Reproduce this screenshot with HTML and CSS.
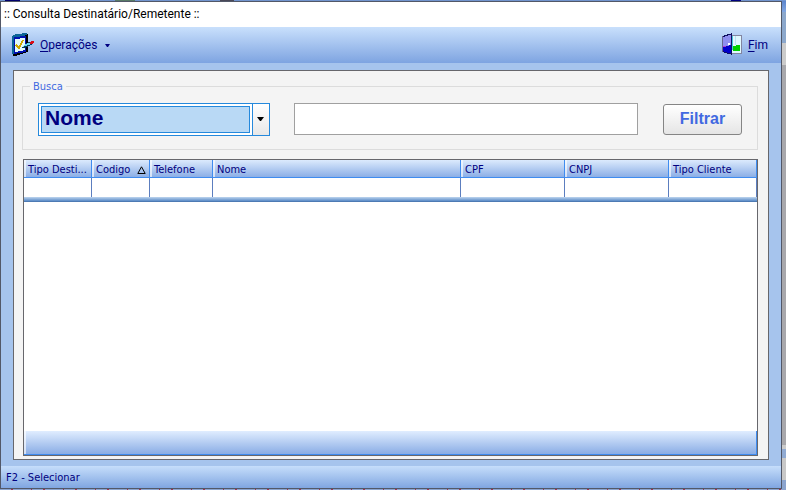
FILE: index.html
```html
<!DOCTYPE html>
<html lang="pt-BR">
<head>
<meta charset="utf-8">
<meta name="viewport" content="width=device-width, initial-scale=1">
<title>Consulta Destinatário/Remetente</title>
<link rel="stylesheet" href="styles.css">
</head>
<body>
<main class="window">
  <h1 class="titlebar">:: Consulta Destinatário/Remetente ::</h1>
  <nav class="toolbar">
    <button class="tool" type="button">
      <svg class="tool-icon" viewBox="0 0 24 24" width="24" height="24" shape-rendering="crispEdges" aria-hidden="true">
        <path d="M2 3 17 1V19L4 23H2z" fill="#000"/>
        <path d="M1 3 5 1 16 0V2L3 5V21H1z" fill="#0b6496"/>
        <path d="M3 4 15 3V19L3 21z" fill="#0010b0"/>
        <path d="M4 6 14 5V17L4 19z" fill="#e2fafa"/>
        <path d="M5 12 8 15 12 7" fill="none" stroke="#d0a800" stroke-width="2"/>
        <path d="M11 15 14 11 21 8 23 9 22 11 16 14 13 15z" fill="#053c58"/>
        <path d="M11 14 14 11 20 9V11L15 13z" fill="#65d5ef"/>
        <path d="M20 8H23V10L21 11H19V9z" fill="#d80b16"/>
      </svg>
      <span><u>O</u>perações</span>
      <svg class="caret" viewBox="0 0 5 3" width="5" height="3" aria-hidden="true"><path d="M0 0H5L3 3H2z" fill="#000080"/></svg>
    </button>
    <button class="tool exit" type="button">
      <svg class="tool-icon" viewBox="0 0 24 24" width="24" height="24" shape-rendering="crispEdges" aria-hidden="true">
        <path d="M11 2H22V21H11z" fill="#8285a0"/>
        <path d="M12 3H21V20H12z" fill="#e0f8ff"/>
        <path d="M13 13H16V12H20V18H13z" fill="#00d000"/>
        <path d="M15 3H16V12H15z" fill="#b8e4f0"/>
        <path d="M2 3 9 1 12 0V22L9 21 2 19z" fill="#101060"/>
        <path d="M2 3H3V19H2z" fill="#686890"/>
        <path d="M3 4 9 2H11V13L3 14z" fill="#8e8eee"/>
        <path d="M3 14 11 12V20L8 20 3 18z" fill="#0000ca"/>
        <path d="M12 3H13V17H12z" fill="#45c9dc"/>
        <path d="M8 10H10V12H8z" fill="#fff"/>
        <path d="M3 13H6V14H3z" fill="#b039dc"/>
      </svg>
      <span><u>F</u>im</span>
    </button>
  </nav>
  <section class="workspace">
    <div class="panel">
      <fieldset class="search">
        <legend>Busca</legend>
        <div class="combo">
          <select aria-label="Campo de busca"><option>Nome</option></select>
          <svg class="combo-arrow" viewBox="0 0 7 4" width="7" height="4" aria-hidden="true"><path d="M0 0H7L4 4H3z" fill="#000"/></svg>
        </div>
        <input class="query" type="text" aria-label="Texto da busca">
        <button class="filter" type="button">Filtrar</button>
      </fieldset>
      <div class="grid">
        <table>
          <colgroup>
            <col class="c-dest"><col class="c-code"><col class="c-phone"><col><col class="c-doc"><col class="c-doc"><col class="c-client">
          </colgroup>
          <thead>
            <tr>
              <th scope="col">Tipo Desti...</th>
              <th scope="col"><span class="sorted">Codigo <svg viewBox="0 0 9 8" width="9" height="8" aria-hidden="true"><path d="M4.5 .8 8.2 7.5H.8z" fill="none" stroke="#000"/></svg></span></th>
              <th scope="col">Telefone</th>
              <th scope="col">Nome</th>
              <th scope="col">CPF</th>
              <th scope="col">CNPJ</th>
              <th scope="col">Tipo Cliente</th>
            </tr>
          </thead>
          <tbody>
            <tr>
              <td><input type="text" aria-label="Filtro Tipo Destinatário"></td>
              <td><input type="text" aria-label="Filtro Codigo"></td>
              <td><input type="text" aria-label="Filtro Telefone"></td>
              <td><input type="text" aria-label="Filtro Nome"></td>
              <td><input type="text" aria-label="Filtro CPF"></td>
              <td><input type="text" aria-label="Filtro CNPJ"></td>
              <td><input type="text" aria-label="Filtro Tipo Cliente"></td>
            </tr>
          </tbody>
        </table>
        <div class="divider"></div>
        <div class="rows"></div>
        <div class="grid-footer"></div>
      </div>
    </div>
  </section>
  <footer class="status">F2 - Selecionar</footer>
</main>
</body>
</html>
```
FILE: styles.css
```css
* { box-sizing: border-box; }

body {
  display: flex;
  min-height: 100vh;
  margin: 0;
  padding: 1px 4px 1px 0;
  font-family: "DejaVu Sans Condensed", "DejaVu Sans", sans-serif;
  color: #000080;
  background:
    repeating-linear-gradient(90deg, transparent 0 11px, #a33450 11px 13px, transparent 13px 31px, #a33450 31px 32px) bottom / 100% 1px no-repeat,
    linear-gradient(90deg, #7194ce 0 5px, #00006c 5px 20px, #7194ce 20px 115px, #587b67 115px 135px, #7194ce 135px 220px, #484858 220px 234px, #7194ce 234px 731px, #000080 731px 741px, #7194ce 741px) top / 100% 1px no-repeat,
    linear-gradient(#5983cb 0, #82a7e2 12px, #8ca8cc 12px 43px, #cbcbcb 43px 65px, #a8a8ac 65px 445px, #cbcbcb 445px 449px, #91abd3 449px 458px, #c8c8c8 458px 480px, #8ba4ce 480px);
}

button, input, select { font: inherit; color: inherit; }

.window {
  display: flex;
  flex: 1;
  flex-direction: column;
  min-width: 0;
  border: 1px solid #525868;
  background: #a6c4ed;
}

.titlebar {
  height: 25px;
  margin: 0;
  padding-left: 3px;
  background: #fff;
  color: #000;
  font: 12px/25px Roboto, sans-serif;
}

.toolbar {
  display: flex;
  justify-content: space-between;
  height: 36px;
  padding: 0 13px 0 10px;
  background: linear-gradient(#c9e0fc, #7ea4e1);
}

.tool {
  display: flex;
  align-items: center;
  gap: 5px;
  padding: 0;
  border: 0;
  background: none;
  font: 12px/16px Roboto, sans-serif;
}

.tool u { text-underline-offset: 2px; }
.exit { min-width: 48px; gap: 4px; }
.caret { margin-left: 3px; }

.workspace {
  display: flex;
  flex: 1;
  padding: 7px 12px 6px;
}

.panel {
  display: flex;
  flex: 1;
  flex-direction: column;
  gap: 9px;
  min-width: 0;
  padding: 9px 10px 3px 8px;
  border: 1px solid #67676c;
  background: #f4f4f4;
}

.search {
  display: flex;
  height: 70px;
  margin: 0;
  padding: 10px 15px 0;
  border: 1px solid #dcdcdc;
}

.search legend {
  margin-left: -8px;
  padding: 0 3px;
  color: #4169e1;
  font-size: 11px;
  line-height: 13px;
}

.combo {
  position: relative;
  flex: 0 0 232px;
  height: 33px;
  padding: 2px 19px 2px 2px;
  border: 1px solid #2589dc;
  background: linear-gradient(#fff, #e8e8e8) right / 16px 100% no-repeat, linear-gradient(#2589dc, #2589dc) right 16px top / 1px 100% no-repeat, #fff;
}

.combo select {
  width: 100%;
  height: 27px;
  padding: 0 3px 3px;
  appearance: none;
  border: 1px solid #2589dc;
  border-radius: 0;
  background: #b9d9f5;
  font: bold 21px/22px "Liberation Sans", Arial, sans-serif;
}

.combo-arrow {
  position: absolute;
  top: 13px;
  right: 5px;
  pointer-events: none;
}

.query {
  flex: 1;
  min-width: 0;
  height: 32px;
  margin: 0 25px 0 24px;
  border: 1px solid #a0a0a0;
  background: #fff;
}

.filter {
  flex: 0 0 79px;
  height: 31px;
  margin-top: 1px;
  padding: 0 0 2px;
  border: 1px solid #858585;
  border-radius: 3px;
  background: linear-gradient(#fff, #e5e5e5);
  color: #4169e1;
  font: bold 16px/20px "Liberation Sans", Arial, sans-serif;
}

.grid {
  display: flex;
  flex: 1;
  flex-direction: column;
  margin-left: 1px;
  border: 1px solid #67676c;
  background: #fff;
}

table {
  width: 100%;
  table-layout: fixed;
  border-collapse: separate;
  border-spacing: 0;
}

.c-dest { width: 68px; }
.c-code { width: 58px; }
.c-phone { width: 63px; }
.c-doc { width: 104px; }
.c-client { width: 88px; }

th {
  height: 18px;
  padding: 2px 0 0 4px;
  border-right: 1px solid #3f8cf0;
  border-bottom: 1px solid #3f8cf0;
  background: linear-gradient(90deg, #ffffffa0 2px, transparent 2px), linear-gradient(#dceafd, #8cafe6);
  font-size: 11px;
  font-weight: normal;
  line-height: 15px;
  text-align: left;
  white-space: nowrap;
}

.sorted {
  display: flex;
  align-items: center;
  justify-content: space-between;
  padding-right: 3px;
}

td {
  height: 19px;
  padding: 0;
  border-right: 1px solid #5c7ebf;
}

td input {
  display: block;
  width: 100%;
  height: 18px;
  padding: 0 3px;
  border: 0;
  background: none;
}

.divider {
  height: 5px;
  background: linear-gradient(#bed5ef, #6694cc 70%, #416da7);
}

.rows { flex: 1; }

.grid-footer {
  height: 24px;
  border-right: 1px solid #3f8cf0;
  border-bottom: 1px solid #3f8cf0;
  background: linear-gradient(90deg, #ffffffa0 2px, transparent 2px), linear-gradient(#e0edff, #8aade5);
}

.status {
  height: 22px;
  padding: 1px 0 0 5px;
  background: linear-gradient(#c6defb, #80a6e1);
  font-size: 11px;
  line-height: 21px;
}
```
